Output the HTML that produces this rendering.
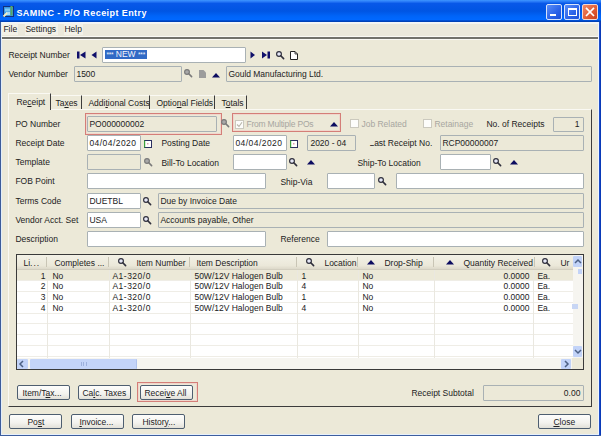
<!DOCTYPE html>
<html><head><meta charset="utf-8">
<style>
html,body{margin:0;padding:0;width:601px;height:436px;overflow:hidden;background:#ECE9D8;}
body{position:relative;font-family:"Liberation Sans",sans-serif;font-size:8.5px;color:#222;}
div{position:absolute;box-sizing:border-box;}
.t{white-space:pre;line-height:10px;height:10px;margin-top:-0.5px;margin-left:-0.6px;}
.g{color:#A7A6A0;}
.in{border:1px solid #A9B1B4;background:#fff;border-radius:1px;}
.ro{background:#ECE9D8;}
.red{border:1px solid #D27C78;}
.btn{border:1px solid #4E5E70;border-radius:2px;background:linear-gradient(#FDFDFC,#F3F2EE 60%,#E2E0D8);}
.tab{border-top:1px solid #FAF9F3;border-right:1px solid #3C3C3C;}
.u{text-decoration:underline;text-decoration-thickness:1px;text-underline-offset:1px;}
svg{position:absolute;overflow:visible;}
</style></head><body>
<div style="left:0px;top:0px;width:601px;height:22px;background:linear-gradient(#3E96FF 0px,#2A7CF8 1.5px,#0858E8 3.5px,#0055E3 11px,#0064F8 16px,#0068FF 19.5px,#0048C8 20.8px,#003CAA 22px);"></div>
<svg style="left:3px;top:6px" width="11" height="11"><rect x="0" y="0" width="11" height="11" fill="#13307A"/><rect x="1" y="1" width="9" height="9" fill="#3A98E4"/><rect x="2" y="2.5" width="5" height="3" fill="#7CC8F4"/><rect x="3" y="6" width="4" height="3" fill="#A8DCF8"/><rect x="7.5" y="0" width="2" height="9.5" fill="#58A860"/><path d="M0.5 10.5 L4 7" stroke="#F4EEC0" stroke-width="1.8"/></svg>
<div class="t" style="left:17px;top:7px;color:#fff;font-weight:bold;font-size:9px;letter-spacing:0.42px;height:12px;line-height:12px;">SAMINC - P/O Receipt Entry</div>
<div style="left:546px;top:4px;width:16px;height:16px;border:1px solid #D8E4FA;border-radius:2px;background:linear-gradient(135deg,#5A8EF8,#2A62E8 60%,#1D4FD6);"></div>
<div style="left:550px;top:14px;width:6px;height:2px;background:#fff;"></div>
<div style="left:564px;top:4px;width:16px;height:16px;border:1px solid #D8E4FA;border-radius:2px;background:linear-gradient(135deg,#5A8EF8,#2A62E8 60%,#1D4FD6);"></div>
<div style="left:568px;top:8px;width:9px;height:8px;border:1px solid #fff;border-top-width:2px;"></div>
<div style="left:582px;top:4px;width:16px;height:16px;border:1px solid #F4D8D0;border-radius:2px;background:linear-gradient(135deg,#F08A6A,#E05A32 60%,#C8421E);"></div>
<svg style="left:582px;top:4px" width="16" height="16"><path d="M4 3.8 L12 12 M12 3.8 L4 12" stroke="#fff" stroke-width="1.7"/></svg>
<div style="left:0px;top:22px;width:1px;height:414px;background:#3D5C9A;"></div>
<div style="left:1px;top:22px;width:1px;height:412px;background:#E2EEFA;"></div>
<div style="left:598px;top:22px;width:1px;height:412px;background:#EEF5FF;"></div>
<div style="left:599px;top:22px;width:2px;height:414px;background:linear-gradient(90deg,#2858D0,#0030B0);"></div>
<div style="left:1px;top:434px;width:598px;height:1px;background:#E6F0FC;"></div>
<div style="left:0px;top:435px;width:601px;height:1px;background:#3D5E9E;"></div>
<div style="left:2px;top:22px;width:596px;height:14px;background:#EBE8DB;"></div>
<div style="left:2px;top:24px;width:16px;height:11px;background:#F3F1E8;"></div>
<div style="left:25px;top:24px;width:33px;height:11px;background:#F3F1E8;"></div>
<div style="left:64px;top:24px;width:19px;height:11px;background:#F3F1E8;"></div>
<div style="left:2px;top:22px;width:596px;height:2px;background:linear-gradient(#F2F6FE,#F4F3EC);"></div>
<div class="t" style="left:4px;top:24.5px;">File</div>
<div class="t" style="left:26px;top:24.5px;">Settings</div>
<div class="t" style="left:65px;top:24.5px;">Help</div>
<div style="left:2px;top:36px;width:596px;height:1px;background:#FAF9F4;"></div>
<div style="left:2px;top:37px;width:596px;height:2px;background:#72716B;"></div>
<div style="left:2px;top:39px;width:596px;height:1px;background:#FAF9F4;"></div>
<div class="t" style="left:9px;top:50px;">Receipt Number</div>
<svg style="left:77px;top:51px" width="22" height="9"><rect x="0" y="0.5" width="2.5" height="7" fill="#10106A"/><path d="M8.5 0.5 L3 4 L8.5 7.5Z" fill="#10106A"/><path d="M19.5 0.5 L14.5 4 L19.5 7.5Z" fill="#10106A"/></svg>
<div class="in" style="left:102px;top:47px;width:144px;height:16px;"></div>
<div style="left:105px;top:49.5px;width:42px;height:9.5px;background:#316AC5;"></div>
<div class="t" style="left:107px;top:49px;color:#F4F6FC;"><span style="font-size:6.5px;letter-spacing:-0.2px">***</span> NEW <span style="font-size:6.5px;letter-spacing:-0.2px">***</span></div>
<svg style="left:250px;top:51px" width="22" height="9"><path d="M0.5 0.5 L5 4 L0.5 7.5Z" fill="#10106A"/><path d="M12 0.5 L17 4 L12 7.5Z" fill="#10106A"/><rect x="17.5" y="0.5" width="2.5" height="7" fill="#10106A"/></svg>
<svg style="left:276px;top:51px" width="10" height="10"><circle cx="3" cy="3" r="2.4" fill="#E6E8F8" stroke="#2F2F3C" stroke-width="1.15"/><path d="M4.8 4.8 L7.6 7.6" stroke="#2F2F3C" stroke-width="1.6" stroke-linecap="round"/></svg>
<svg style="left:290px;top:51px" width="8" height="9"><path d="M0.5 0.5 H5 L7.5 3 V8.5 H0.5Z" fill="#fff" stroke="#222" stroke-width="1"/><path d="M5 0.5 V3 H7.5" fill="none" stroke="#222" stroke-width="0.8"/></svg>
<div class="t" style="left:9px;top:69px;">Vendor Number</div>
<div class="in ro" style="left:74px;top:66px;width:108px;height:16px;"></div>
<div class="t" style="left:77px;top:69px;">1500</div>
<svg style="left:184px;top:69px" width="10" height="10"><circle cx="3" cy="3" r="2.4" fill="#A8A8A8" stroke="#7A7A7A" stroke-width="1.15"/><path d="M4.8 4.8 L7.6 7.6" stroke="#7A7A7A" stroke-width="1.6" stroke-linecap="round"/></svg>
<svg style="left:199px;top:70px" width="7" height="8"><path d="M0 0 H4.5 L7 2.5 V8 H0Z" fill="#9C9C9C"/></svg>
<svg style="left:212px;top:72.5px" width="8" height="4.5"><path d="M0 4.5 L4.0 0 L8 4.5Z" fill="#0C0C60"/></svg>
<div class="in ro" style="left:226px;top:66px;width:366px;height:16px;"></div>
<div class="t" style="left:229px;top:69px;letter-spacing:-0.03px;">Gould Manufacturing Ltd.</div>
<div class="tab" style="left:51px;top:95px;width:31px;height:14px;"></div>
<div class="tab" style="left:82px;top:95px;width:68px;height:14px;"></div>
<div class="tab" style="left:150px;top:95px;width:65px;height:14px;"></div>
<div class="tab" style="left:215px;top:95px;width:32px;height:14px;"></div>
<div style="left:8px;top:109px;width:584px;height:298px;border-top:1px solid #FAF9F3;border-left:1px solid #FAF9F3;border-right:1px solid #3C3C3C;border-bottom:1px solid #3C3C3C;"></div>
<div class="tab" style="left:8px;top:93px;width:43px;height:17px;background:#ECE9D8;border-left:1px solid #FAF9F3;"></div>
<div class="t" style="left:17px;top:97px;">Re<span class="u">c</span>eipt</div>
<div class="t" style="left:56px;top:98px;">Ta<span class="u">x</span>es</div>
<div class="t" style="left:89px;top:98px;">Addi<span class="u">t</span>ional Costs</div>
<div class="t" style="left:157px;top:98px;">Optio<span class="u">n</span>al Fields</div>
<div class="t" style="left:222px;top:98px;">T<span class="u">o</span>tals</div>
<div class="t" style="left:16px;top:119px;">PO Number</div>
<div style="left:85px;top:113px;width:137px;height:22px;border:1px solid #D47E78;box-shadow:inset 0 0 0 1px #F0D6CC;"></div>
<div class="in ro" style="left:87px;top:116px;width:130px;height:16px;"></div>
<div class="t" style="left:90px;top:119px;">PO000000002</div>
<svg style="left:221px;top:119px" width="10" height="10"><circle cx="3" cy="3" r="2.4" fill="#A8A8A8" stroke="#7A7A7A" stroke-width="1.15"/><path d="M4.8 4.8 L7.6 7.6" stroke="#7A7A7A" stroke-width="1.6" stroke-linecap="round"/></svg>
<div style="left:232px;top:113px;width:109px;height:19px;border:1px solid #D47E78;box-shadow:inset 0 0 0 1px #F0D6CC;"></div>
<div style="left:235px;top:120px;width:9px;height:9px;border:1px solid #CBC9BE;background:#FDFDFB;"></div>
<svg style="left:236px;top:121px" width="7" height="7"><path d="M1 3.5 L3 5.5 L6 1.2" fill="none" stroke="#B8B6AA" stroke-width="1.1"/></svg>
<div class="t g" style="left:247px;top:119px;letter-spacing:-0.2px;">From Multiple POs</div>
<svg style="left:330px;top:121.5px" width="8" height="4.5"><path d="M0 4.5 L4.0 0 L8 4.5Z" fill="#0C0C60"/></svg>
<div style="left:350px;top:119px;width:9px;height:9px;border:1px solid #CBC9BE;background:#FDFDFB;"></div>
<div class="t g" style="left:362px;top:119px;">Job Related</div>
<div style="left:423px;top:119px;width:9px;height:9px;border:1px solid #CBC9BE;background:#FDFDFB;"></div>
<div class="t g" style="left:435px;top:119px;">Retainage</div>
<div class="t" style="left:487px;top:119px;">No. of Receipts</div>
<div class="in ro" style="left:553px;top:117px;width:31px;height:15px;"></div>
<div class="t" style="left:553px;top:119px;width:27px;text-align:right;">1</div>
<div class="t" style="left:16px;top:138px;">Receipt Date</div>
<div class="in" style="left:87px;top:135px;width:54px;height:16px;"></div>
<div class="t" style="left:90px;top:138px;letter-spacing:0.45px;">04/04/2020</div>
<svg style="left:144px;top:140px" width="8" height="8"><rect x="0.5" y="0.5" width="7" height="7" fill="#fff" stroke="#2B2F60" stroke-width="1"/><path d="M0.6 0.5 V7.5" stroke="#3AA03A" stroke-width="1.2"/><rect x="3" y="3" width="1.5" height="1.5" fill="#E0A0B0"/></svg>
<div class="t" style="left:162px;top:138px;">Posting Date</div>
<div class="in" style="left:233px;top:135px;width:54px;height:16px;"></div>
<div class="t" style="left:236px;top:138px;letter-spacing:0.45px;">04/04/2020</div>
<svg style="left:290px;top:140px" width="8" height="8"><rect x="0.5" y="0.5" width="7" height="7" fill="#fff" stroke="#2B2F60" stroke-width="1"/><path d="M0.6 0.5 V7.5" stroke="#3AA03A" stroke-width="1.2"/><rect x="3" y="3" width="1.5" height="1.5" fill="#E0A0B0"/></svg>
<div class="in ro" style="left:307px;top:135px;width:49px;height:16px;"></div>
<div class="t" style="left:311px;top:138px;">2020 - 04</div>
<div class="t" style="left:370px;top:138px;">Last Receipt No.</div>
<div style="left:369px;top:139px;width:3px;height:6px;background:#ECE9D8;"></div>
<div class="in ro" style="left:440px;top:135px;width:144px;height:16px;"></div>
<div class="t" style="left:443px;top:138px;">RCP00000007</div>
<div class="t" style="left:16px;top:157px;">Template</div>
<div class="in ro" style="left:87px;top:154px;width:54px;height:16px;"></div>
<svg style="left:144px;top:158px" width="10" height="10"><circle cx="3" cy="3" r="2.4" fill="#A8A8A8" stroke="#7A7A7A" stroke-width="1.15"/><path d="M4.8 4.8 L7.6 7.6" stroke="#7A7A7A" stroke-width="1.6" stroke-linecap="round"/></svg>
<div class="t" style="left:162px;top:158px;">Bill-To Location</div>
<div class="in" style="left:233px;top:154px;width:54px;height:16px;"></div>
<svg style="left:289px;top:158px" width="10" height="10"><circle cx="3" cy="3" r="2.4" fill="#E6E8F8" stroke="#2F2F3C" stroke-width="1.15"/><path d="M4.8 4.8 L7.6 7.6" stroke="#2F2F3C" stroke-width="1.6" stroke-linecap="round"/></svg>
<svg style="left:307px;top:159.5px" width="8" height="4.5"><path d="M0 4.5 L4.0 0 L8 4.5Z" fill="#0C0C60"/></svg>
<div class="t" style="left:358px;top:158px;">Ship-To Location</div>
<div class="in" style="left:440px;top:154px;width:51px;height:16px;"></div>
<svg style="left:493px;top:158px" width="10" height="10"><circle cx="3" cy="3" r="2.4" fill="#E6E8F8" stroke="#2F2F3C" stroke-width="1.15"/><path d="M4.8 4.8 L7.6 7.6" stroke="#2F2F3C" stroke-width="1.6" stroke-linecap="round"/></svg>
<svg style="left:510px;top:159.5px" width="8" height="4.5"><path d="M0 4.5 L4.0 0 L8 4.5Z" fill="#0C0C60"/></svg>
<div class="t" style="left:16px;top:176px;">FOB Point</div>
<div class="in" style="left:87px;top:173px;width:179px;height:16px;"></div>
<div class="t" style="left:281px;top:177px;">Ship-Via</div>
<div class="in" style="left:327px;top:173px;width:48px;height:16px;"></div>
<svg style="left:378px;top:177px" width="10" height="10"><circle cx="3" cy="3" r="2.4" fill="#E6E8F8" stroke="#2F2F3C" stroke-width="1.15"/><path d="M4.8 4.8 L7.6 7.6" stroke="#2F2F3C" stroke-width="1.6" stroke-linecap="round"/></svg>
<div class="in" style="left:396px;top:173px;width:188px;height:16px;"></div>
<div class="t" style="left:16px;top:196px;">Terms Code</div>
<div class="in" style="left:87px;top:193px;width:54px;height:16px;"></div>
<div class="t" style="left:90px;top:196px;">DUETBL</div>
<svg style="left:143px;top:197px" width="10" height="10"><circle cx="3" cy="3" r="2.4" fill="#E6E8F8" stroke="#2F2F3C" stroke-width="1.15"/><path d="M4.8 4.8 L7.6 7.6" stroke="#2F2F3C" stroke-width="1.6" stroke-linecap="round"/></svg>
<div class="in ro" style="left:158px;top:193px;width:426px;height:16px;"></div>
<div class="t" style="left:161px;top:196px;">Due by Invoice Date</div>
<div class="t" style="left:16px;top:215px;">Vendor Acct. Set</div>
<div class="in" style="left:87px;top:212px;width:54px;height:16px;"></div>
<div class="t" style="left:90px;top:215px;">USA</div>
<svg style="left:143px;top:216px" width="10" height="10"><circle cx="3" cy="3" r="2.4" fill="#E6E8F8" stroke="#2F2F3C" stroke-width="1.15"/><path d="M4.8 4.8 L7.6 7.6" stroke="#2F2F3C" stroke-width="1.6" stroke-linecap="round"/></svg>
<div class="in ro" style="left:158px;top:212px;width:426px;height:16px;"></div>
<div class="t" style="left:161px;top:215px;">Accounts payable, Other</div>
<div class="t" style="left:16px;top:234px;">Description</div>
<div class="in" style="left:87px;top:231px;width:179px;height:16px;"></div>
<div class="t" style="left:281px;top:234px;">Reference</div>
<div class="in" style="left:327px;top:231px;width:257px;height:16px;"></div>
<div style="left:16px;top:254px;width:568px;height:116px;border:1px solid #3A3A3A;background:#fff;"></div>
<div style="left:17px;top:255px;width:556px;height:14px;background:linear-gradient(#F3F1E7,#EBE8D9 75%,#DDD9CA);"></div>
<div style="left:17px;top:269px;width:556px;height:1px;background:#D2CEBF;"></div>
<div style="left:46px;top:257px;width:1px;height:10px;background:#C9C5B5;"></div>
<div style="left:108px;top:257px;width:1px;height:10px;background:#C9C5B5;"></div>
<div style="left:189px;top:257px;width:1px;height:10px;background:#C9C5B5;"></div>
<div style="left:296px;top:257px;width:1px;height:10px;background:#C9C5B5;"></div>
<div style="left:357px;top:257px;width:1px;height:10px;background:#C9C5B5;"></div>
<div style="left:433px;top:257px;width:1px;height:10px;background:#C9C5B5;"></div>
<div style="left:534px;top:257px;width:1px;height:10px;background:#C9C5B5;"></div>
<div style="left:17px;top:270px;width:556px;height:10px;background:#ECE9D8;"></div>
<div style="left:17px;top:280px;width:556px;height:1px;background:#EFEDE6;"></div>
<div style="left:17px;top:291px;width:556px;height:1px;background:#EFEDE6;"></div>
<div style="left:17px;top:302px;width:556px;height:1px;background:#EFEDE6;"></div>
<div style="left:17px;top:313px;width:556px;height:1px;background:#EFEDE6;"></div>
<div style="left:17px;top:323px;width:556px;height:1px;background:#EFEDE6;"></div>
<div style="left:17px;top:334px;width:556px;height:1px;background:#EFEDE6;"></div>
<div style="left:17px;top:345px;width:556px;height:1px;background:#EFEDE6;"></div>
<div style="left:17px;top:356px;width:556px;height:1px;background:#EFEDE6;"></div>
<div style="left:47px;top:270px;width:1px;height:88px;background:#EAE8E0;"></div>
<div style="left:109px;top:270px;width:1px;height:88px;background:#EAE8E0;"></div>
<div style="left:190px;top:270px;width:1px;height:88px;background:#EAE8E0;"></div>
<div style="left:297px;top:270px;width:1px;height:88px;background:#EAE8E0;"></div>
<div style="left:358px;top:270px;width:1px;height:88px;background:#EAE8E0;"></div>
<div style="left:434px;top:270px;width:1px;height:88px;background:#EAE8E0;"></div>
<div style="left:533px;top:270px;width:1px;height:88px;background:#EAE8E0;"></div>
<div class="t" style="left:24px;top:258px;">Li<span style="letter-spacing:1px">...</span></div>
<div class="t" style="left:55px;top:258px;">Completes ...</div>
<div class="t" style="left:137px;top:258px;">Item Number</div>
<div class="t" style="left:197px;top:258px;">Item Description</div>
<div class="t" style="left:325px;top:258px;">Location</div>
<div class="t" style="left:385px;top:258px;">Drop-Ship</div>
<div class="t" style="left:464px;top:258px;">Quantity Received</div>
<div class="t" style="left:561px;top:258px;">Ur</div>
<svg style="left:118px;top:258px" width="10" height="10"><circle cx="3" cy="3" r="2.4" fill="#E6E8F8" stroke="#2F2F3C" stroke-width="1.15"/><path d="M4.8 4.8 L7.6 7.6" stroke="#2F2F3C" stroke-width="1.6" stroke-linecap="round"/></svg>
<svg style="left:306px;top:258px" width="10" height="10"><circle cx="3" cy="3" r="2.4" fill="#E6E8F8" stroke="#2F2F3C" stroke-width="1.15"/><path d="M4.8 4.8 L7.6 7.6" stroke="#2F2F3C" stroke-width="1.6" stroke-linecap="round"/></svg>
<svg style="left:542px;top:258px" width="10" height="10"><circle cx="3" cy="3" r="2.4" fill="#E6E8F8" stroke="#2F2F3C" stroke-width="1.15"/><path d="M4.8 4.8 L7.6 7.6" stroke="#2F2F3C" stroke-width="1.6" stroke-linecap="round"/></svg>
<svg style="left:367px;top:260px" width="8" height="4.5"><path d="M0 4.5 L4.0 0 L8 4.5Z" fill="#0C0C60"/></svg>
<svg style="left:446px;top:260px" width="8" height="4.5"><path d="M0 4.5 L4.0 0 L8 4.5Z" fill="#0C0C60"/></svg>
<div class="t" style="left:17px;top:271.1px;width:29px;text-align:right;">1</div>
<div class="t" style="left:53px;top:271.1px;">No</div>
<div class="t" style="left:113px;top:271.1px;letter-spacing:0.5px;">A1-320/0</div>
<div class="t" style="left:195px;top:271.1px;">50W/12V Halogen Bulb</div>
<div class="t" style="left:302px;top:271.1px;">1</div>
<div class="t" style="left:363px;top:271.1px;">No</div>
<div class="t" style="left:481px;top:271.1px;width:49px;text-align:right;">0.0000</div>
<div class="t" style="left:538px;top:271.1px;">Ea.</div>
<div class="t" style="left:17px;top:281.85px;width:29px;text-align:right;">2</div>
<div class="t" style="left:53px;top:281.85px;">No</div>
<div class="t" style="left:113px;top:281.85px;letter-spacing:0.5px;">A1-320/0</div>
<div class="t" style="left:195px;top:281.85px;">50W/12V Halogen Bulb</div>
<div class="t" style="left:302px;top:281.85px;">4</div>
<div class="t" style="left:363px;top:281.85px;">No</div>
<div class="t" style="left:481px;top:281.85px;width:49px;text-align:right;">0.0000</div>
<div class="t" style="left:538px;top:281.85px;">Ea.</div>
<div class="t" style="left:17px;top:292.6px;width:29px;text-align:right;">3</div>
<div class="t" style="left:53px;top:292.6px;">No</div>
<div class="t" style="left:113px;top:292.6px;letter-spacing:0.5px;">A1-320/0</div>
<div class="t" style="left:195px;top:292.6px;">50W/12V Halogen Bulb</div>
<div class="t" style="left:302px;top:292.6px;">1</div>
<div class="t" style="left:363px;top:292.6px;">No</div>
<div class="t" style="left:481px;top:292.6px;width:49px;text-align:right;">0.0000</div>
<div class="t" style="left:538px;top:292.6px;">Ea.</div>
<div class="t" style="left:17px;top:303.35px;width:29px;text-align:right;">4</div>
<div class="t" style="left:53px;top:303.35px;">No</div>
<div class="t" style="left:113px;top:303.35px;letter-spacing:0.5px;">A1-320/0</div>
<div class="t" style="left:195px;top:303.35px;">50W/12V Halogen Bulb</div>
<div class="t" style="left:302px;top:303.35px;">4</div>
<div class="t" style="left:363px;top:303.35px;">No</div>
<div class="t" style="left:481px;top:303.35px;width:49px;text-align:right;">0.0000</div>
<div class="t" style="left:538px;top:303.35px;">Ea.</div>
<div style="left:573px;top:255px;width:10px;height:103px;background:#F6F5F0;"></div>
<div style="left:573px;top:256px;width:9px;height:11px;background:#C2D3F8;border-radius:1px;"></div>
<svg style="left:574px;top:258px" width="8" height="7"><path d="M1 5 L4 2 L7 5" fill="none" stroke="#4D6185" stroke-width="1.5"/></svg>
<div style="left:578px;top:269px;width:4px;height:5px;background:#C2D3F8;"></div>
<div style="left:572px;top:304px;width:6px;height:5px;background:#C8D6F4;"></div>
<div style="left:573px;top:346px;width:9px;height:11px;background:#C2D3F8;border-radius:1px;"></div>
<svg style="left:574px;top:348px" width="8" height="7"><path d="M1 2 L4 5 L7 2" fill="none" stroke="#4D6185" stroke-width="1.5"/></svg>
<div style="left:17px;top:358px;width:556px;height:11px;background:#F6F5F0;"></div>
<div style="left:17px;top:359px;width:11px;height:10px;background:#C2D3F8;border-radius:1px;"></div>
<svg style="left:18px;top:360px" width="8" height="8"><path d="M5 1 L2 4 L5 7" fill="none" stroke="#4D6185" stroke-width="1.5"/></svg>
<div style="left:30px;top:359px;width:107px;height:10px;background:#C4D4F8;border-right:1px solid #AFC2EC;border-radius:1px;"></div>
<div style="left:81px;top:362px;width:6px;height:4px;border-left:1px solid #9DB0DC;border-right:1px solid #9DB0DC;"></div>
<div style="left:83px;top:362px;width:2px;height:4px;border-left:1px solid #9DB0DC;"></div>
<div style="left:561px;top:359px;width:10px;height:10px;background:#C2D3F8;border-radius:1px;"></div>
<svg style="left:562px;top:360px" width="8" height="8"><path d="M3 1 L6 4 L3 7" fill="none" stroke="#4D6185" stroke-width="1.5"/></svg>
<div style="left:572px;top:358px;width:11px;height:11px;background:#ECE9D8;"></div>
<div class="btn" style="left:17px;top:385px;width:53px;height:15px;"></div>
<div class="t" style="left:23px;top:388px;">Item/T<span class="u">a</span>x...</div>
<div class="btn" style="left:78px;top:385px;width:53px;height:15px;"></div>
<div class="t" style="left:83px;top:388px;">Ca<span class="u">l</span>c. Taxes</div>
<div style="left:137px;top:382px;width:61px;height:20px;border:1px solid #D47E78;box-shadow:inset 0 0 0 1px #F0D6CC;"></div>
<div class="btn" style="left:140px;top:385px;width:53px;height:15px;"></div>
<div class="t" style="left:145px;top:388px;">Recei<span class="u">v</span>e All</div>
<div class="t" style="left:412px;top:388px;">Receipt Subtotal</div>
<div class="in ro" style="left:483px;top:385px;width:101px;height:16px;"></div>
<div class="t" style="left:483px;top:388px;width:98px;text-align:right;">0.00</div>
<div class="btn" style="left:9px;top:414px;width:53px;height:15px;"></div>
<div class="t" style="left:28px;top:417px;">Po<span class="u">s</span>t</div>
<div class="btn" style="left:71px;top:414px;width:53px;height:15px;"></div>
<div class="t" style="left:80px;top:417px;"><span class="u">I</span>nvoice...</div>
<div class="btn" style="left:132px;top:414px;width:53px;height:15px;"></div>
<div class="t" style="left:143px;top:417px;">Histor<span class="u">y</span>...</div>
<div class="btn" style="left:538px;top:414px;width:53px;height:15px;"></div>
<div class="t" style="left:554px;top:417px;"><span class="u">C</span>lose</div>
</body></html>
